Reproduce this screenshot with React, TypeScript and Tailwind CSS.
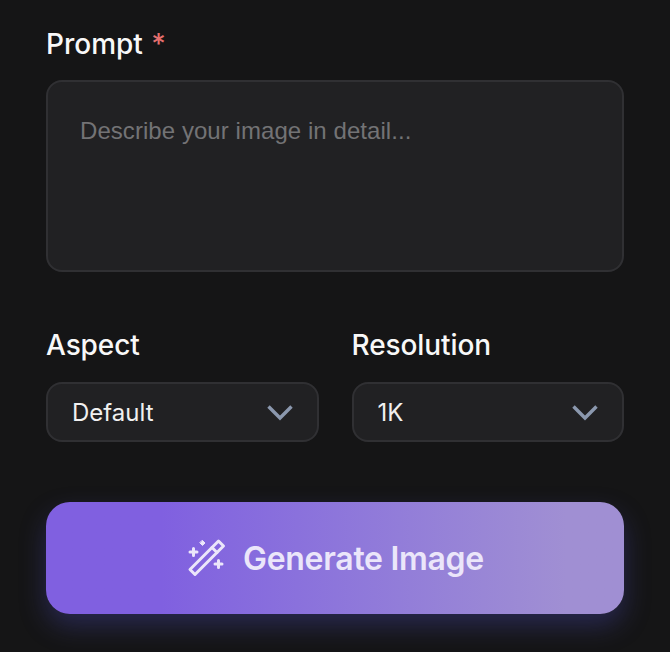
export default function App() {
  const Chevron = () => (
    <svg width="28" height="28" viewBox="0 0 28 28" fill="none" stroke="#8b98ae" strokeWidth="3.4" strokeLinecap="butt" strokeLinejoin="miter">
      <path d="M2.5 8.5 14 20 25.5 8.5" />
    </svg>
  );
  return (
    <div className="w-[670px] h-[652px] overflow-hidden bg-[#151516] px-[46px] pt-[27px] font-['Inter',sans-serif]">
      <label className="block h-[34px] text-[28px] leading-[34px] font-medium text-[#f8f8f8]">
        Prompt <span className="ml-[1px] text-[#e56f6f]">*</span>
      </label>
      <div className="mt-[19px] h-[192px] rounded-[16px] border-2 border-[#303033] bg-[#212123] px-[32px] pt-[32px] font-['Liberation_Sans',sans-serif] text-[24px] leading-[34px] tracking-[0.06px] text-[#737375]">
        Describe your image in detail...
      </div>
      <div className="mt-[56px] grid grid-cols-2 gap-[33px]">
        {[["Aspect", "Default"], ["Resolution", "1K"]].map(([label, value]) => (
          <div key={label}>
            <div className="h-[34px] text-[28px] leading-[34px] font-medium tracking-[-0.1px] text-[#f8f8f8]">{label}</div>
            <div className="mt-[20px] flex h-[60px] items-center justify-between rounded-[16px] border-2 border-[#303033] bg-[#212123] pl-[24px] pr-[23px] text-[24px] text-[#f0f0f0]">
              <span className="pt-[2px]">{value}</span>
              <Chevron />
            </div>
          </div>
        ))}
      </div>
      <button className="mt-[60px] flex h-[112px] w-full items-center justify-center gap-[17px] rounded-[24px] bg-gradient-to-r from-[#8060e0] from-20% to-[#a08fd3] to-90% text-[32px] font-semibold tracking-[-0.3px] text-[#ebe6fa] shadow-[0_12px_26px_rgba(70,70,170,0.38)]">
        <svg width="40" height="40" viewBox="0 0 40 40" fill="none" stroke="currentColor" strokeWidth="3" strokeLinecap="round" strokeLinejoin="round">
          <path d="M4 31.5 32.5 3l5 5L9 36.5Z" />
          <path d="m26 9.5 5 5" />
          <path d="M7.5 10.5v7M4 14h7M32.5 22.5v7M29 26h7" />
          <path d="M16.5 2.5 19 5l-2.5 2.5L14 5Z" fill="currentColor" strokeWidth="1" />
        </svg>
        <span className="pt-[2px]">Generate Image</span>
      </button>
    </div>
  );
}
